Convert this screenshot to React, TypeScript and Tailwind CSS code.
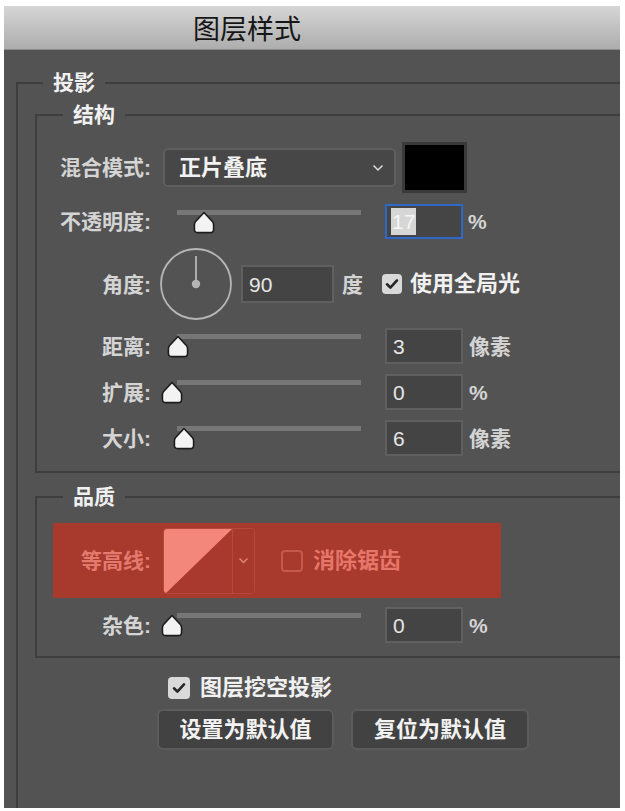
import React from "react";

function Thumb({ left }: { left: number }) {
  return (
    <svg
      className="absolute top-[1px]"
      style={{ left }}
      width="22"
      height="23"
      viewBox="0 0 22 23"
    >
      <path
        d="M11 1.5 L19.6 10.8 Q20.6 12 20.6 14 L20.6 18.2 Q20.6 21.6 17.2 21.6 L4.8 21.6 Q1.4 21.6 1.4 18.2 L1.4 14 Q1.4 12 2.4 10.8 Z"
        fill="#f3f3f3"
        stroke="#1c1c1c"
        strokeWidth="1.6"
        strokeLinejoin="round"
      />
    </svg>
  );
}

function Slider({ thumb }: { thumb: number }) {
  return (
    <div className="relative w-[184px] h-[24px] shrink-0">
      <div className="h-[5px] w-full bg-[#777777]" />
      <Thumb left={thumb} />
    </div>
  );
}

function Label({ children, w = "w-[114px]" }: { children: React.ReactNode; w?: string }) {
  return (
    <div className={`${w} shrink-0 text-right text-[21px] font-bold text-[#d4d4d4] leading-none`}>
      {children}
    </div>
  );
}

function NumInput({ value, w = "w-[78px]", h = "h-[36px]" }: { value: string; w?: string; h?: string }) {
  return (
    <div
      className={`${w} ${h} shrink-0 border-2 border-[#606060] bg-[#444444] flex items-center pl-[6px] text-[21px] text-[#e6e6e6] leading-none`}
    >
      {value}
    </div>
  );
}

function Check({ size = "w-[20px] h-[20px]" }: { size?: string }) {
  return (
    <div className={`${size} shrink-0 rounded-[4px] bg-[#d9d9d9] flex items-center justify-center`}>
      <svg width="14" height="12" viewBox="0 0 14 12">
        <path d="M2 6.3 L5.4 9.6 L12 2.4" fill="none" stroke="#262626" strokeWidth="2.6" strokeLinecap="round" strokeLinejoin="round" />
      </svg>
    </div>
  );
}

function SliderRow({ label, thumb, value, unit, mt }: { label: string; thumb: number; value: string; unit: string; mt: string }) {
  return (
    <div className={`flex items-center h-[36px] ${mt}`}>
      <Label>{label}</Label>
      <div className="ml-[26px]">
        <Slider thumb={thumb} />
      </div>
      <div className="ml-[24px]">
        <NumInput value={value} />
      </div>
      <div className="ml-[6px] text-[21px] font-bold text-[#d4d4d4] leading-none">{unit}</div>
    </div>
  );
}

export default function App() {
  return (
    <div className="w-[625px] h-[811px] bg-white pt-[6px] pl-[4px] font-['Liberation_Sans','Noto_Sans_CJK_SC',sans-serif]">
      <div className="w-[616px] h-[802px] bg-[#535353] overflow-hidden flex flex-col">
        <div className="h-[44px] shrink-0 bg-gradient-to-b from-[#d6d6d6] to-[#adadad] border-b border-[#8a8a8a] flex items-center pl-[189px]">
          <span className="text-[27px] leading-none text-[#161616] font-['Noto_Sans_CJK_SC',sans-serif]">图层样式</span>
        </div>
        <div className="pl-[12px]">
          <fieldset className="mt-[19px] w-[700px] h-[800px] border-2 border-[#3e3e3e]">
            <legend className="ml-[25px] px-[10px] h-[28px] leading-[28px] text-[21px] font-bold text-[#f0f0f0]">投影</legend>
            <div className="pl-[17px] pt-[4px]">
              {/* 结构 */}
              <fieldset className="w-[700px] border-2 border-[#3e3e3e] pt-[13px] pb-[15px]">
                <legend className="ml-[26px] px-[10px] h-[28px] leading-[28px] text-[21px] font-bold text-[#f0f0f0]">结构</legend>
                {/* Row 1 */}
                <div className="flex items-center h-[51px]">
                  <Label>混合模式:</Label>
                  <div className="ml-[12px] w-[233px] h-[39px] rounded-[5px] border-2 border-[#5e5e5e] bg-[#474747] flex items-center pl-[14px] pr-[10px]">
                    <span className="text-[22px] font-bold text-[#f2f2f2] leading-none">正片叠底</span>
                    <svg className="ml-auto" width="12" height="8" viewBox="0 0 12 8">
                      <path d="M1.5 1.5 L6 6 L10.5 1.5" fill="none" stroke="#dddddd" strokeWidth="1.5" />
                    </svg>
                  </div>
                  <div className="ml-[6px] w-[65px] h-[51px] bg-black border-[3px] border-[#3a3a3a]" />
                </div>
                {/* Row 2 */}
                <div className="flex items-center h-[35px] mt-[11px]">
                  <Label>不透明度:</Label>
                  <div className="ml-[26px]">
                    <Slider thumb={16} />
                  </div>
                  <div className="ml-[24px] w-[78px] h-[35px] border-2 border-[#2f68c9] bg-[#454545] flex items-center pl-[4px]">
                    <span className="bg-[#d6d6d6] text-[#f5f5f5] h-[27px] px-[1px] flex items-center text-[21px] leading-none">17</span>
                  </div>
                  <div className="ml-[5px] text-[21px] font-bold text-[#d4d4d4] leading-none">%</div>
                </div>
                {/* Row 3 */}
                <div className="flex items-center h-[72px] mt-[9px]">
                  <Label>角度:</Label>
                  <svg className="ml-[9px] shrink-0" width="72" height="72" viewBox="0 0 72 72">
                    <circle cx="36" cy="36" r="35" fill="none" stroke="#b5b5b5" strokeWidth="1.8" />
                    <line x1="36" y1="8" x2="36" y2="36" stroke="#b5b5b5" strokeWidth="1.8" />
                    <circle cx="36" cy="36" r="4.2" fill="#b5b5b5" />
                  </svg>
                  <div className="ml-[9px]">
                    <NumInput value="90" w="w-[93px]" h="h-[38px]" />
                  </div>
                  <div className="ml-[8px] text-[21px] font-bold text-[#d4d4d4] leading-none">度</div>
                  <div className="ml-[19px]">
                    <Check />
                  </div>
                  <div className="ml-[8px] text-[22px] font-bold text-[#f0f0f0] leading-none">使用全局光</div>
                </div>
                <SliderRow label="距离:" thumb={-10} value="3" unit="像素" mt="mt-[8px]" />
                <SliderRow label="扩展:" thumb={-16} value="0" unit="%" mt="mt-[10px]" />
                <SliderRow label="大小:" thumb={-4} value="6" unit="像素" mt="mt-[10px]" />
              </fieldset>

              {/* 品质 */}
              <fieldset className="mt-[10px] w-[700px] border-2 border-[#3e3e3e] pt-[12px] pb-[13px]">
                <legend className="ml-[26px] px-[10px] h-[28px] leading-[28px] text-[21px] font-bold text-[#f0f0f0]">品质</legend>
                <div className="ml-[16px] w-[448px] h-[75px] bg-[#a8392d] flex items-center">
                  <Label w="w-[98px]">
                    <span className="text-[#e27a6e]">等高线:</span>
                  </Label>
                  <div className="ml-[12px] flex h-[66px] rounded-[4px] border border-[#b8473b] overflow-hidden">
                    <svg width="68" height="66" viewBox="0 0 68 66" className="shrink-0">
                      <rect width="68" height="66" fill="#a9392e" />
                      <polygon points="0,0 68,0 0,66" fill="#f4877b" />
                    </svg>
                    <div className="w-[22px] border-l border-[#b8473b] bg-[#a6382c] flex items-center justify-center">
                      <svg width="11" height="7" viewBox="0 0 11 7">
                        <path d="M1.5 1.5 L5.5 5.5 L9.5 1.5" fill="none" stroke="#e5867a" strokeWidth="1.4" />
                      </svg>
                    </div>
                  </div>
                  <div className="ml-[26px] w-[22px] h-[22px] rounded-[4px] border-2 border-[#c35a4e]" />
                  <div className="ml-[10px] text-[22px] font-bold text-[#e6766a] leading-none">消除锯齿</div>
                </div>
                <SliderRow label="杂色:" thumb={-16} value="0" unit="%" mt="mt-[9px]" />
              </fieldset>

              {/* Bottom */}
              <div className="flex items-center h-[22px] mt-[19px] pl-[133px]">
                <Check size="w-[22px] h-[22px]" />
                <div className="ml-[10px] text-[22px] font-bold text-[#f0f0f0] leading-none">图层挖空投影</div>
              </div>
              <div className="flex mt-[10px] pl-[122px] gap-[17px]">
                <div className="w-[177px] h-[41px] rounded-[6px] border-2 border-[#5c5c5c] bg-[#424242] flex items-center justify-center text-[22px] font-bold text-[#f2f2f2] leading-none">
                  设置为默认值
                </div>
                <div className="w-[178px] h-[41px] rounded-[6px] border-2 border-[#5c5c5c] bg-[#424242] flex items-center justify-center text-[22px] font-bold text-[#f2f2f2] leading-none">
                  复位为默认值
                </div>
              </div>
            </div>
          </fieldset>
        </div>
      </div>
    </div>
  );
}
